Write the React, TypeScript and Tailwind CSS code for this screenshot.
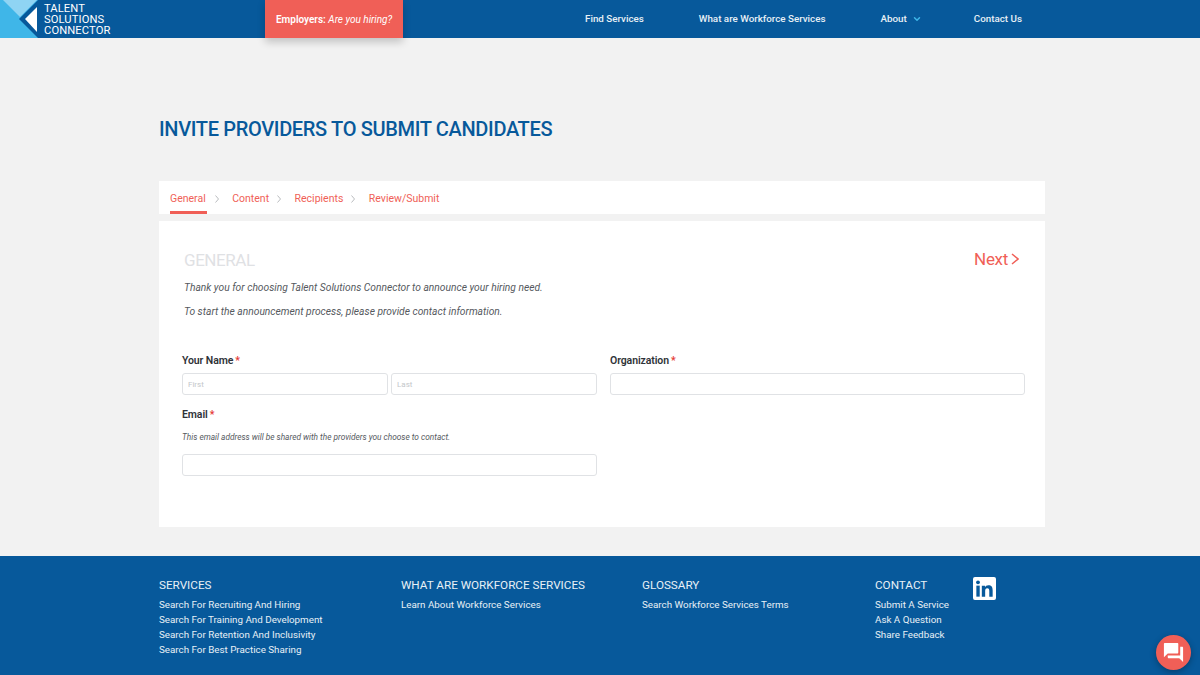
import { ChevronDown } from "lucide-react"

const font = "font-['Roboto','Liberation_Sans',sans-serif]"

const tabs = ["General", "Content", "Recipients", "Review/Submit"]

const footerCols = [
  { title: "SERVICES", cls: "w-[242px]", links: ["Search For Recruiting And Hiring", "Search For Training And Development", "Search For Retention And Inclusivity", "Search For Best Practice Sharing"] },
  { title: "WHAT ARE WORKFORCE SERVICES", cls: "w-[241px]", links: ["Learn About Workforce Services"] },
  { title: "GLOSSARY", cls: "w-[233px]", links: ["Search Workforce Services Terms"] },
  { title: "CONTACT", cls: "w-[98px]", links: ["Submit A Service", "Ask A Question", "Share Feedback"] },
]

function Logo() {
  return (
    <svg width="38" height="38" viewBox="0 0 38 38" className="shrink-0">
      <rect width="38" height="38" fill="#07599b" />
      <polygon points="0,0 38,0 19,19 38,38 0,38" fill="#3fb6e8" />
      <polygon points="3,0 37,0 20,17" fill="#8fd4f3" />
      <polygon points="37,7 37,32 25,19" fill="#ffffff" />
    </svg>
  )
}

function Label({ text }: { text: string }) {
  return (
    <div className="text-[10.5px] leading-[14px] font-semibold text-[#2f3338] tracking-[-0.1px]">
      {text}<span className="ml-[2px] text-[#e53935]">*</span>
    </div>
  )
}

function Field({ placeholder, cls }: { placeholder?: string; cls: string }) {
  return (
    <input
      placeholder={placeholder}
      className={`${cls} block bg-white border border-[#e0e2e5] rounded-[3px] px-[5px] text-[8px] outline-none placeholder:text-[#c4c7ca]`}
    />
  )
}

export default function App() {
  return (
    <div className={`${font} w-[1200px] h-[675px] overflow-hidden flex flex-col bg-[#f2f2f2] relative`}>
      <header className="h-[38px] shrink-0 bg-[#07599b] flex text-white">
        <Logo />
        <div className="w-[227px] pl-[6px] pt-[3px] text-[11.2px] leading-[11px] tracking-[0.1px]">
          TALENT<br />SOLUTIONS<br />CONNECTOR
        </div>
        <div className="w-[138px] h-[38px] bg-[#f05f57] flex items-center justify-center text-[10px] font-semibold shadow-[0_4px_8px_rgba(0,0,0,0.2)]">
          Employers:&nbsp;<span className="italic font-normal">Are you hiring?</span>
        </div>
        <nav className="flex items-center text-[9.8px] font-medium text-[#e8f0f6]">
          <span className="ml-[182px]">Find Services</span>
          <span className="ml-[55px]">What are Workforce Services</span>
          <span className="ml-[55px]">About</span>
          <ChevronDown className="ml-[5px] w-[10px] h-[10px] text-[#3fb6e8]" strokeWidth={3.5} />
          <span className="ml-[52px]">Contact Us</span>
        </nav>
      </header>

      <main className="h-[518px] shrink-0 pl-[159px]">
        <h1 className="pt-[78px] h-[143px] text-[20px] leading-[27px] font-medium text-[#07599b] tracking-[-0.33px]">
          INVITE PROVIDERS TO SUBMIT CANDIDATES
        </h1>
        <div className="w-[886px] h-[33px] bg-white flex pl-[11px] text-[10.5px] text-[#f05f57]">
          {tabs.map((t, i) => (
            <div key={t} className="flex">
              {i > 0 && (
                <span className="w-[25.5px] pt-[14px] pl-[8px]">
                  <svg width="4" height="8" viewBox="0 0 4 8" fill="none" stroke="#a8abae" strokeWidth="0.8" className="block">
                    <polyline points="0.5,0.5 3.5,4 0.5,7.5" />
                  </svg>
                </span>
              )}
              <span className={`h-[33px] pt-[11px] leading-[13px] ${i === 0 ? "pr-[1px] border-b-[3px] border-[#f05f57]" : ""}`}>{t}</span>
            </div>
          ))}
        </div>
        <section className="mt-[7px] w-[886px] h-[306px] bg-white pl-[23px] pr-[20px]">
          <div className="flex justify-between pt-[28px] pl-[2px]">
            <div className="text-[17px] leading-[22px] text-[#dfe1e4] tracking-[-0.45px]">GENERAL</div>
            <div className="flex items-center gap-[3px] h-[20px] text-[17px] leading-[20px] text-[#f05f57] pr-[6px] tracking-[-0.3px]">
              Next
              <svg width="8" height="12" viewBox="0 0 8 12" fill="none" stroke="#f05f57" strokeWidth="1.5">
                <polyline points="1,1 7,6 1,11" />
              </svg>
            </div>
          </div>
          <p className="mt-[10px] pl-[2px] text-[10.25px] leading-[13px] italic text-[#55595e]">
            Thank you for choosing Talent Solutions Connector to announce your hiring need.
          </p>
          <p className="mt-[11px] pl-[2px] text-[10.25px] leading-[13px] italic text-[#55595e]">
            To start the announcement process, please provide contact information.
          </p>
          <div className="mt-[36px] flex">
            <div className="w-[428px]">
              <Label text="Your Name" />
              <div className="mt-[5px] flex gap-[3px]">
                <Field placeholder="First" cls="w-[206px] h-[22px]" />
                <Field placeholder="Last" cls="w-[206px] h-[22px]" />
              </div>
              <div className="mt-[13px]"><Label text="Email" /></div>
              <p className="mt-[10px] text-[8.3px] leading-[10px] italic text-[#55595e]">
                This email address will be shared with the providers you choose to contact.
              </p>
              <Field cls="mt-[12px] w-[415px] h-[22px]" />
            </div>
            <div>
              <Label text="Organization" />
              <Field cls="mt-[5px] w-[415px] h-[22px]" />
            </div>
          </div>
        </section>
      </main>

      <footer className="flex-1 bg-[#07599b] flex pl-[159px] pt-[22px] text-[#e8f0f6]">
        {footerCols.map((c) => (
          <div key={c.title} className={c.cls}>
            <div className="text-[11.7px] leading-[14px]">{c.title}</div>
            <div className="mt-[5px] text-[9.8px] leading-[15px]">
              {c.links.map((l) => <div key={l}>{l}</div>)}
            </div>
          </div>
        ))}
        <svg width="23" height="23" viewBox="0 0 24 24" className="shrink-0 -mt-[1px]">
          <rect width="24" height="24" rx="2" fill="#ffffff" />
          <rect x="3.5" y="9" width="3.5" height="11.5" fill="#07599b" />
          <circle cx="5.2" cy="5.6" r="2" fill="#07599b" />
          <path d="M9.2 9h3.3v1.6c.6-1 1.8-1.9 3.5-1.9 3.4 0 4.5 2 4.5 5.2v6.6H17v-5.9c0-1.5-.4-2.9-2.1-2.9s-2.2 1.3-2.2 2.9v5.9H9.2z" fill="#07599b" />
        </svg>
      </footer>

      <button className="absolute left-[1156px] top-[635px] w-[35px] h-[35px] rounded-full bg-[#f05f57] flex items-center justify-center shadow-[0_2px_6px_rgba(0,0,0,0.3)]">
        <svg width="23" height="23" viewBox="0 0 24 24" fill="#ffffff">
          <path d="M21 6h-2v9H6v2c0 .55.45 1 1 1h11l4 4V7c0-.55-.45-1-1-1zm-4 6V3c0-.55-.45-1-1-1H3c-.55 0-1 .45-1 1v14l4-4h10c.55 0 1-.45 1-1z" />
        </svg>
      </button>
    </div>
  )
}
